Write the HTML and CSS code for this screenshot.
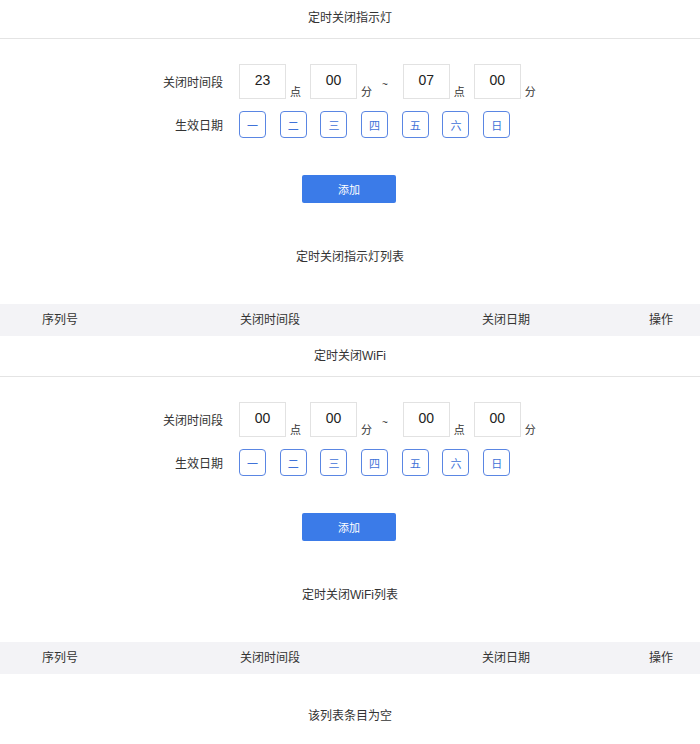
FILE: index.html
```html
<!DOCTYPE html>
<html lang="zh-CN">
  <head>
    <meta charset="utf-8">
    <title>定时关闭</title>
    <link rel="stylesheet" href="styles.css">
  </head>
  <body>

    <div class="section">
      <div class="sec_title">定时关闭指示灯</div>
      <div class="form_holder">
        <div class="row">
          <span class="label">关闭时间段</span>
          <input class="num" type="text" value="23"><span class="unit">点</span>
          <input class="num" type="text" value="00"><span class="unit">分</span><span class="tilde">~</span>
          <input class="num" type="text" value="07"><span class="unit">点</span>
          <input class="num" type="text" value="00"><span class="unit">分</span>
        </div>
        <div class="row">
          <span class="label">生效日期</span>
          <div class="days">
            <button class="day">一</button>
            <button class="day">二</button>
            <button class="day">三</button>
            <button class="day">四</button>
            <button class="day">五</button>
            <button class="day">六</button>
            <button class="day">日</button>
          </div>
        </div>
      </div>
      <div class="btn_holder">
        <button class="add_btn">添加</button>
      </div>
      <div class="list_title">定时关闭指示灯列表</div>
      <div class="table_head">
        <span>序列号</span>
        <span>关闭时间段</span>
        <span>关闭日期</span>
        <span class="op">操作</span>
      </div>
    </div>

    <div class="section">
      <div class="sec_title">定时关闭WiFi</div>
      <div class="form_holder">
        <div class="row">
          <span class="label">关闭时间段</span>
          <input class="num" type="text" value="00"><span class="unit">点</span>
          <input class="num" type="text" value="00"><span class="unit">分</span><span class="tilde">~</span>
          <input class="num" type="text" value="00"><span class="unit">点</span>
          <input class="num" type="text" value="00"><span class="unit">分</span>
        </div>
        <div class="row">
          <span class="label">生效日期</span>
          <div class="days">
            <button class="day">一</button>
            <button class="day">二</button>
            <button class="day">三</button>
            <button class="day">四</button>
            <button class="day">五</button>
            <button class="day">六</button>
            <button class="day">日</button>
          </div>
        </div>
      </div>
      <div class="btn_holder">
        <button class="add_btn">添加</button>
      </div>
      <div class="list_title">定时关闭WiFi列表</div>
      <div class="table_head">
        <span>序列号</span>
        <span>关闭时间段</span>
        <span>关闭日期</span>
        <span class="op">操作</span>
      </div>
      <div class="empty">该列表条目为空</div>
    </div>

  </body>
</html>
```

FILE: styles.css
```css
body{
  margin: 0;
  font-family: "Liberation Sans", "Noto Sans CJK SC", sans-serif;
  font-size: 12px;
  color: #333333;
  background: #ffffff;
}

.section{
  padding-bottom: 2px;
}

.sec_title{
  height: 38px;
  line-height: 36px;
  text-align: center;
  border-bottom: 1px solid #e4e4e4;
}

.form_holder{
  width: 374px;
  margin: 0 auto;
  padding-top: 25px;
}

.row{
  display: flex;
  align-items: center;
  margin-bottom: 12px;
}

.label{
  width: 60px;
  margin-right: 16px;
  text-align: right;
  white-space: nowrap;
}

.num{
  box-sizing: border-box;
  width: 47px;
  height: 35px;
  margin: 0;
  padding: 0 0 3px 0;
  border: 1px solid #e2e2e2;
  outline: 0;
  text-align: center;
  font-family: "Liberation Sans", sans-serif;
  font-size: 14px;
  color: #222222;
}

.unit{
  align-self: flex-end;
  margin: 0 9px 0 4px;
  font-size: 11px;
  line-height: 14px;
}

.tilde{
  margin: 0 15px 0 1px;
  font-size: 10px;
  padding-top: 6px;
}

.days{
  display: flex;
  gap: 13.7px;
}

.day{
  box-sizing: border-box;
  width: 27px;
  height: 27px;
  padding: 0;
  border: 1px solid #5a86e3;
  border-radius: 4px;
  background: #ffffff;
  color: #3f72d8;
  font-family: "Noto Sans CJK SC", sans-serif;
  font-size: 11px;
  cursor: pointer;
}

.btn_holder{
  text-align: center;
  padding-top: 25px;
}

.add_btn{
  width: 94px;
  height: 28px;
  margin-left: -2px;
  border: none;
  border-radius: 2px;
  background-color: #3b7be8;
  color: #ffffff;
  font-family: "Noto Sans CJK SC", sans-serif;
  font-size: 11px;
  cursor: pointer;
}

.list_title{
  text-align: center;
  margin-top: 46px;
  line-height: 16px;
}

.table_head{
  display: grid;
  grid-template-columns: 120px 300px 172px 1fr;
  height: 32px;
  line-height: 32px;
  margin-top: 39px;
  background-color: #f3f3f6;
  text-align: center;
}

.table_head .op{
  text-align: right;
  padding-right: 27px;
}

.empty{
  height: 86px;
  line-height: 84px;
  text-align: center;
}
```
